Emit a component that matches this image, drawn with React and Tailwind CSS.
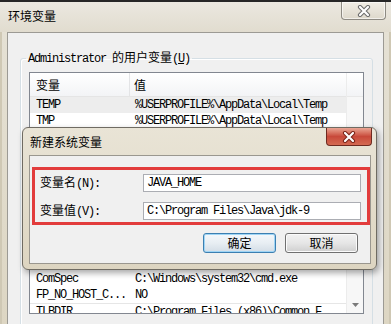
import React from "react";

const mono = "font-['Liberation_Mono',monospace] tracking-[-1.2px]";

function CloseX({ outline }) {
  return (
    <svg width="16" height="12" viewBox="0 0 16 12">
      <path d="M4 2 L12 10 M12 2 L4 10" stroke={outline} strokeWidth="4.2" strokeLinecap="round" />
      <path d="M4 2 L12 10 M12 2 L4 10" stroke="#ffffff" strokeWidth="2.2" strokeLinecap="round" />
    </svg>
  );
}

function Row({ name, value, selected, line }) {
  return (
    <div className={`flex h-[16px] items-center shrink-0 ${selected ? "bg-[#ededed]" : ""} ${line ? "border-t border-[#e6e6e6]" : ""}`}>
      <div className={`w-[100px] pl-[6px] whitespace-nowrap overflow-hidden ${mono}`}>{name}</div>
      <div className={`pl-[5px] whitespace-nowrap ${mono}`}>{value}</div>
    </div>
  );
}

export default function App() {
  return (
    <div className="relative w-[391px] h-[324px] overflow-hidden bg-gradient-to-b from-[#e6e2d6] to-[#ddd6c3] font-['Noto_Sans_CJK_SC',sans-serif] text-[12px] leading-[16px] text-black">
      {/* title bar */}
      <div className="flex justify-between h-[32px] border-t-[2px] border-[#262626] bg-gradient-to-b from-[#ebe8e0] to-[#e1dccf]">
        <div className="pl-[8px] pt-[6px]">环境变量</div>
        <div className="mr-[5px] w-[45px] h-[18px] rounded-b-[4px] border border-t-0 border-[#8d8a82] bg-gradient-to-b from-[#f1eee6] to-[#ddd8cb] flex items-center justify-center shadow-[inset_0_0_0_1px_rgba(255,255,255,0.6)]">
          <CloseX outline="#6b6b6b" />
        </div>
      </div>

      {/* body */}
      <div className="flex h-[292px]">
        <div className="w-[7px] border-l-[2px] border-[#cfc8b4]" />
        <div className="flex-1 border border-b-0 border-[#9c9a94] bg-[#f0f0f0] pt-[16px] pl-[12px] pr-[10px] overflow-hidden">
          <fieldset className="border border-[#d5dfe5] rounded-[3px] h-[300px] shadow-[inset_1px_1px_0_#ffffff]">
            <legend className="ml-[5px] px-[2px] leading-[16px]">
              <span className={mono}>Administrator </span>的用户变量<span className={mono}>(<span className="underline">U</span>)</span>
            </legend>
            <div className="mt-[5px] mx-[8px] h-[242px] border border-[#828790] bg-white flex">
              <div className="flex-1 flex flex-col overflow-hidden">
                <div className="flex h-[24px] shrink-0 items-center bg-gradient-to-b from-[#ffffff] to-[#f3f4f6] border-b border-[#e5e5e5]">
                  <div className="w-[100px] h-full pl-[6px] flex items-center border-r border-[#e3e4e6]">变量</div>
                  <div className="pl-[4px]">值</div>
                </div>
                <Row name="TEMP" value="%USERPROFILE%\AppData\Local\Temp" selected />
                <Row name="TMP" value="%USERPROFILE%\AppData\Local\Temp" />
                <div className="h-[142px] shrink-0" />
                <Row name="ComSpec" value="C:\Windows\system32\cmd.exe" />
                <Row name="FP_NO_HOST_C..." value="NO" />
                <Row name="TLBDIR" value="C:\Program Files (x86)\Common F" line />
              </div>
              <div className="w-[17px] flex flex-col justify-between bg-[#f7f7f7] border-l border-[#ececec]">
                <div className="h-[24px] bg-gradient-to-b from-[#ffffff] to-[#f3f4f6] border-b border-[#e8e8e8]" />
                <div className="h-[17px] flex items-center justify-center">
                  <svg width="7" height="4" viewBox="0 0 7 4">
                    <polygon points="0,0 7,0 3.5,4" fill="#7a7a7a" />
                  </svg>
                </div>
              </div>
            </div>
          </fieldset>
        </div>
        <div className="w-[7px] border-r-[2px] border-[#cfc8b4]" />
      </div>

      {/* dialog */}
      <div className="absolute left-[22px] top-[127px] w-[355px] h-[143px] rounded-[6px] border border-[#6f6b62] bg-gradient-to-b from-[#e9e4d6] to-[#ddd5c1] shadow-[2px_3px_6px_rgba(0,0,0,0.35)] flex flex-col">
        <div className="flex justify-between h-[27px] shrink-0">
          <div className="pl-[7px] pt-[6px]">新建系统变量</div>
          <div className="mr-[4px] w-[46px] h-[18px] rounded-b-[4px] border border-t-0 border-[#6e2a20] bg-gradient-to-b from-[#e9a594] via-[#c8493a] to-[#d46a52] flex items-center justify-center">
            <CloseX outline="#7a2418" />
          </div>
        </div>
        <div className="mx-[5px] ml-[6px] h-[109px] border border-[#9a978f] bg-[#f0f0f0] flex flex-col">
          <div className="mt-[11px] ml-[2px] h-[58px] border-[3px] border-[#e23c3c] flex flex-col pl-[5px] pr-[6px] pt-[4px] gap-[10px]">
            <div className="flex items-center h-[18px]">
              <div className="w-[103px] whitespace-nowrap">变量名<span className={mono}>(N):</span></div>
              <div className={`flex-1 h-[18px] border border-[#abadb3] bg-white pl-[3px] flex items-center ${mono}`}>JAVA_HOME</div>
            </div>
            <div className="flex items-center h-[18px]">
              <div className="w-[103px] whitespace-nowrap">变量值<span className={mono}>(V):</span></div>
              <div className={`flex-1 h-[18px] border border-[#abadb3] bg-white pl-[3px] flex items-center whitespace-nowrap ${mono}`}>C:\Program Files\Java\jdk-9</div>
            </div>
          </div>
          <div className="mt-[8px] flex justify-end gap-[9px] pr-[12px]">
            <div className="w-[73px] h-[20px] rounded-[3px] border border-[#3c7fb1] bg-gradient-to-b from-[#f4f8fb] via-[#e8eef3] to-[#d3dde6] shadow-[inset_0_0_0_1px_#9fd5f5] flex items-center justify-center">确定</div>
            <div className="w-[73px] h-[20px] rounded-[3px] border border-[#707070] bg-gradient-to-b from-[#f2f2f2] via-[#e6e6e6] to-[#cfcfcf] shadow-[inset_0_0_0_1px_#fbfbfb] flex items-center justify-center">取消</div>
          </div>
        </div>
      </div>
    </div>
  );
}
